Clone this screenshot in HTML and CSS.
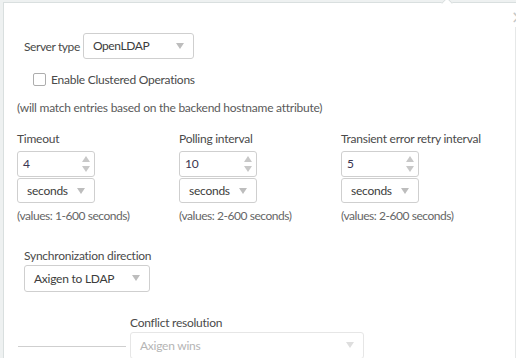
FILE: index.html
```html
<!DOCTYPE html>
<html lang="en">
<head>
    <meta charset="UTF-8">
    <title>LDAP Sync Settings</title>
    <link rel="stylesheet" href="styles.css">
</head>
<body>

    <div class="popup">
        <span class="popup-arrow"></span>
        <div class="popup-header"><span class="close">&times;</span></div>

        <div class="popup-body">
            <div class="server-row">
                <span class="label">Server type</span>
                <div class="select server-select">OpenLDAP<span class="caret"></span></div>
            </div>

            <div class="check-row">
                <span class="checkbox"></span>
                <span>Enable Clustered Operations</span>
            </div>

            <p class="note">(will match entries based on the backend hostname attribute)</p>

            <div class="intervals">
                <div class="field">
                    <div class="label">Timeout</div>
                    <div class="spin">4<span class="spin-arrows"><i class="up"></i><i class="down"></i></span></div>
                    <div class="select unit">seconds<span class="caret"></span></div>
                    <div class="hint">(values: 1-600 seconds)</div>
                </div>
                <div class="field">
                    <div class="label">Polling interval</div>
                    <div class="spin">10<span class="spin-arrows"><i class="up"></i><i class="down"></i></span></div>
                    <div class="select unit">seconds<span class="caret"></span></div>
                    <div class="hint">(values: 2-600 seconds)</div>
                </div>
                <div class="field">
                    <div class="label">Transient error retry interval</div>
                    <div class="spin">5<span class="spin-arrows"><i class="up"></i><i class="down"></i></span></div>
                    <div class="select unit">seconds<span class="caret"></span></div>
                    <div class="hint">(values: 2-600 seconds)</div>
                </div>
            </div>

            <div class="sync">
                <div class="label">Synchronization direction</div>
                <div class="select sync-select">Axigen to LDAP<span class="caret"></span></div>
            </div>

            <div class="conflict">
                <span class="rule"></span>
                <div class="conflict-field">
                    <div class="label">Conflict resolution</div>
                    <div class="select disabled conflict-select">Axigen wins<span class="caret"></span></div>
                </div>
            </div>
        </div>
    </div>

</body>
</html>
```

FILE: styles.css
```css
body {
    margin: 0;
    height: 358px;
    overflow: hidden;
    background-color: #eef1f1;
    font-family: Lato, "Open Sans", sans-serif;
    font-size: 12px;
    line-height: 15px;
    letter-spacing: -0.25px;
    color: #4a4a4a;
}
.popup {
    position: relative;
    margin: 2px 0 0 3px;
    width: 560px;
    height: 400px;
    background-color: white;
    border: 1px solid #d9dfdf;
}
.popup-arrow {
    position: absolute;
    top: -4px;
    left: 439px;
    width: 7px;
    height: 7px;
    background: white;
    border-top: 1px solid #d9dfdf;
    border-left: 1px solid #d9dfdf;
    transform: rotate(45deg);
}
.popup-header {
    height: 24px;
    padding-left: 507px;
}
.close {
    display: block;
    font-size: 17px;
    line-height: 17px;
    padding-top: 6px;
    color: #c4c8c8;
    font-family: "DejaVu Sans", sans-serif;
}
.popup-body {
    width: 498px;
    height: 400px;
    padding: 6px 0 0 13px;
    border-right: 1px solid #e6e8e8;
}
.label {
    color: #4a4a4a;
}
.select {
    position: relative;
    box-sizing: border-box;
    height: 25px;
    line-height: 23px;
    padding-left: 9px;
    border: 1px solid #cfcfcf;
    border-radius: 3px;
    color: #3c3c3c;
    background: white;
}
.caret {
    position: absolute;
    right: 9px;
    top: 9px;
    border-left: 4px solid transparent;
    border-right: 4px solid transparent;
    border-top: 6px solid #bdbdbd;
}
.server-row {
    display: flex;
    align-items: center;
    gap: 3px;
    margin-left: 7px;
    letter-spacing: -0.4px;
}
.server-select {
    width: 111px;
    height: 26px;
    line-height: 24px;
}
.check-row {
    display: flex;
    align-items: center;
    gap: 5px;
    margin: 13px 0 0 16px;
}
.checkbox {
    width: 11px;
    height: 11px;
    border: 1px solid #adadad;
    border-radius: 2px;
}
.note {
    margin: 13px 0 0;
    color: #5a5a5a;
}
.intervals {
    display: grid;
    grid-template-columns: 162px 162px 162px;
    margin-top: 16px;
}
.field .label {
    margin-bottom: 5px;
}
.spin {
    position: relative;
    box-sizing: border-box;
    width: 78px;
    height: 26px;
    line-height: 24px;
    padding-left: 5px;
    border: 1px solid #cfcfcf;
    border-radius: 3px;
    color: #3a3450;
}
.spin-arrows {
    position: absolute;
    right: 4px;
    top: 4px;
    display: flex;
    flex-direction: column;
    gap: 4px;
}
.spin-arrows i {
    border-left: 4px solid transparent;
    border-right: 4px solid transparent;
}
.spin-arrows .up {
    border-bottom: 6px solid #c8c8c8;
}
.spin-arrows .down {
    border-top: 6px solid #c8c8c8;
}
.unit {
    width: 78px;
    margin-top: 1px;
}
.hint {
    margin-top: 5px;
    color: #666;
    letter-spacing: -0.45px;
}
.sync {
    margin: 25px 0 0 7px;
}
.sync-select {
    width: 126px;
    height: 27px;
    line-height: 25px;
    margin-top: 2px;
}
.conflict {
    display: flex;
    align-items: flex-end;
    margin-top: 23px;
}
.rule {
    width: 108px;
    height: 1px;
    margin: 0 4px 12px 1px;
    background-color: #cfcfcf;
}
.conflict-select {
    width: 234px;
    height: 27px;
    line-height: 25px;
    margin-top: 2px;
}
.select.disabled {
    border-color: #e6e6e6;
    color: #b5b5b5;
}
.select.disabled .caret {
    border-top-color: #dedede;
}
```
